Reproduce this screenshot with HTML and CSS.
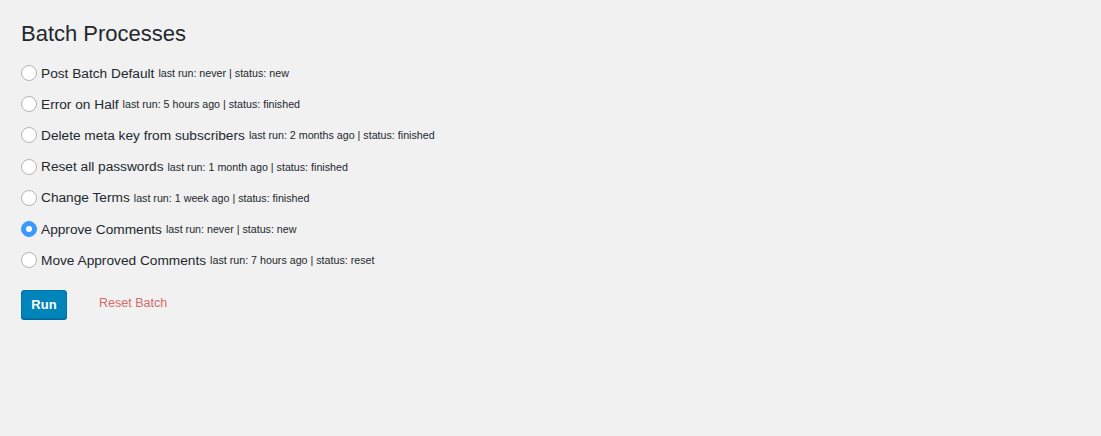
FILE: index.html
```html
<!DOCTYPE html>
<html>
<head>
  <title>Batch Processes</title>
  <link rel="stylesheet" href="styles.css">
</head>
<body>
  <div class="wrap">
    <h1>Batch Processes</h1>
    <form class="batches">
      <label class="batch"><input type="radio" name="batch"><span class="name">Post Batch Default</span> <small>last run: never | status: new</small></label>
      <label class="batch"><input type="radio" name="batch"><span class="name">Error on Half</span> <small>last run: 5 hours ago | status: finished</small></label>
      <label class="batch"><input type="radio" name="batch"><span class="name">Delete meta key from subscribers</span> <small>last run: 2 months ago | status: finished</small></label>
      <label class="batch"><input type="radio" name="batch"><span class="name">Reset all passwords</span> <small>last run: 1 month ago | status: finished</small></label>
      <label class="batch"><input type="radio" name="batch"><span class="name">Change Terms</span> <small>last run: 1 week ago | status: finished</small></label>
      <label class="batch"><input type="radio" name="batch" checked><span class="name">Approve Comments</span> <small>last run: never | status: new</small></label>
      <label class="batch"><input type="radio" name="batch"><span class="name">Move Approved Comments</span> <small>last run: 7 hours ago | status: reset</small></label>
      <div class="actions">
        <button type="button" class="button">Run</button>
        <a href="#" class="reset">Reset Batch</a>
      </div>
    </form>
  </div>
</body>
</html>
```

FILE: styles.css
```css
body {
  margin: 0;
  background: #f1f1f1;
  color: #23282d;
  font-family: "Liberation Sans", Arial, sans-serif;
}

.wrap {
  padding: 20px 21px;
}

h1 {
  margin: 0 0 15px;
  font-size: 22px;
  font-weight: 400;
  line-height: 1.3;
}

.batches {
  display: flex;
  flex-direction: column;
  gap: 12.2px;
}

.batch {
  display: flex;
  align-items: center;
  font-size: 13.7px;
  height: 19px;
}

.batch small {
  font-size: 10.7px;
  margin-left: 4px;
}

.batch input {
  appearance: none;
  margin: 0 4px 0 0;
  width: 16px;
  height: 16px;
  border-radius: 50%;
  border: 1px solid #b4b4b4;
  background: #fff;
  box-sizing: border-box;
  display: flex;
  align-items: center;
  justify-content: center;
}

.batch input:checked {
  background: #3b99fc;
  border-color: #3b99fc;
}

.batch input:checked::before {
  content: "";
  width: 6px;
  height: 6px;
  border-radius: 50%;
  background: #fff;
}

.actions {
  display: flex;
  align-items: center;
  gap: 32px;
  margin-top: 8px;
}

.button {
  width: 46px;
  height: 29px;
  background: #0085ba;
  border: 1px solid #0073aa;
  border-radius: 3px;
  box-shadow: 0 1px 0 #006799;
  color: #fff;
  font: 700 13px "Liberation Sans", Arial, sans-serif;
  padding: 0;
}

.reset {
  color: #d16b6b;
  font-size: 12.5px;
  text-decoration: none;
  margin-bottom: 3px;
}
```
